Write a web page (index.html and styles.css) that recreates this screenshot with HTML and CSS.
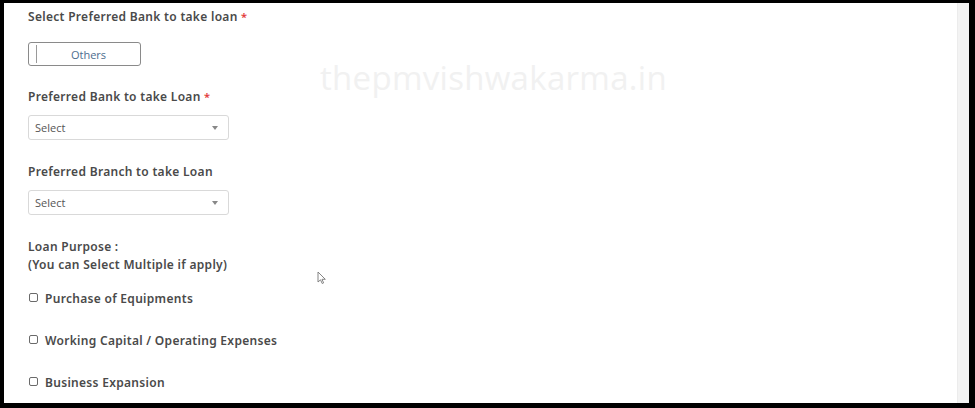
FILE: index.html
```html
<!DOCTYPE html>
<html>
<head>
<meta charset="utf-8">
<link rel="stylesheet" href="styles.css">
</head>
<body>
<div class="frame">
  <main class="content">
    <div class="watermark">thepmvishwakarma.in</div>
    <div class="label">Select Preferred Bank to take loan <span class="req">*</span></div>
    <div class="toggle"><span class="toggle-edge"></span><span class="toggle-text">Others</span></div>

    <div class="label gap-a">Preferred Bank to take Loan <span class="req">*</span></div>
    <div class="select"><span>Select</span><span class="caret"></span></div>

    <div class="label gap-b">Preferred Branch to take Loan</div>
    <div class="select"><span>Select</span><span class="caret"></span></div>

    <div class="label gap-b">Loan Purpose :<br>(You can Select Multiple if apply)</div>

    <div class="checks">
      <label class="check"><span class="box"></span>Purchase of Equipments</label>
      <label class="check"><span class="box"></span>Working Capital / Operating Expenses</label>
      <label class="check"><span class="box"></span>Business Expansion</label>
    </div>

    <svg class="cursor" width="10" height="14" viewBox="0 0 10 14"><path d="M1 1 L1 11 L3.5 8.8 L5.2 12.5 L6.6 11.9 L5 8.3 L8.3 8.3 Z" fill="#fff" stroke="#777" stroke-width="0.9" stroke-linejoin="round"/></svg>
  </main>
  <div class="scrollbar"></div>
</div>
</body>
</html>
```

FILE: styles.css
```css
html, body {
  margin: 0;
  padding: 0;
  background: #000;
  width: 975px;
  height: 408px;
  overflow: hidden;
}
.frame {
  margin: 3px 6px 0 4px;
  height: 400px;
  background: #fff;
  display: flex;
}
.content {
  position: relative;
  flex: 1;
  padding: 5px 0 0 24px;
  display: flex;
  flex-direction: column;
  align-items: flex-start;
  font-family: "Noto Sans", "DejaVu Sans", sans-serif;
}
.scrollbar {
  width: 11px;
  background: #f3f3f3;
  border-left: 1px solid #ececec;
}
.label {
  font-size: 12px;
  line-height: 18px;
  font-weight: 600;
  color: #4a4a4a;
  letter-spacing: 0.3px;
}
.label.gap-a { margin-top: 22px; }
.label.gap-b { margin-top: 23px; }
.req { color: #e23b3b; font-size: 11px; }
.toggle {
  margin-top: 16px;
  width: 111px;
  height: 22px;
  border: 1px solid #8a8a8a;
  border-radius: 3px;
  display: flex;
  align-items: center;
}
.toggle-edge {
  width: 7px;
  align-self: stretch;
  margin: 2px 0;
  border-right: 1px solid #9a9a9a;
}
.toggle-text {
  flex: 1;
  text-align: center;
  font-family: "Open Sans", sans-serif;
  font-size: 11px;
  color: #4d6d8e;
}
.select {
  margin-top: 9px;
  width: 183px;
  height: 23px;
  border: 1px solid #d9d9d9;
  border-radius: 3px;
  display: flex;
  align-items: center;
  justify-content: space-between;
  padding: 0 10px 0 6px;
  font-family: "Open Sans", sans-serif;
  font-size: 11px;
  color: #555;
}
.caret {
  width: 0;
  height: 0;
  border-left: 3px solid transparent;
  border-right: 3px solid transparent;
  border-top: 4px solid #888;
}
.checks {
  margin-top: 14px;
  display: flex;
  flex-direction: column;
  gap: 22px;
}
.check {
  height: 20px;
  display: flex;
  align-items: center;
  font-size: 12px;
  font-weight: 600;
  color: #4a4a4a;
  letter-spacing: 0.3px;
}
.box {
  width: 7px;
  height: 7px;
  border: 1px solid #6a6a6a;
  border-radius: 2px;
  margin: 0 7px 1px 1px;
}
.watermark {
  position: absolute;
  left: 316px;
  top: 52px;
  font-family: "Open Sans", sans-serif;
  font-size: 33px;
  color: #f1f1f1;
  letter-spacing: 0.3px;
}
.cursor {
  position: absolute;
  left: 313px;
  top: 268px;
}
```
